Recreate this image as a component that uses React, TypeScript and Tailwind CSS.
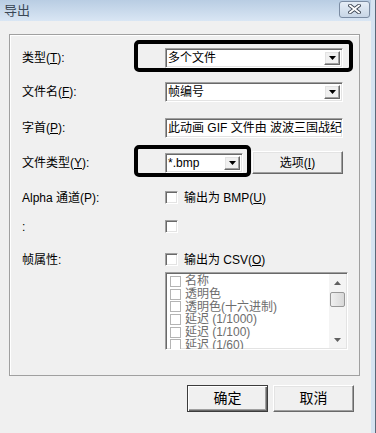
import React from "react";

const font = "font-['Liberation_Sans','Noto_Sans_CJK_SC',sans-serif]";

// classic sunken field border
const sunken =
  "border border-t-[#a0a0a0] border-l-[#a0a0a0] border-r-white border-b-white shadow-[inset_1px_1px_0_#696969,inset_-1px_-1px_0_#e3e3e3]";
// classic raised button border
const raised =
  "border border-t-white border-l-white border-r-[#696969] border-b-[#696969] shadow-[inset_-1px_-1px_0_#a0a0a0,inset_1px_1px_0_#e3e3e3] bg-[#f0f0f0]";

const Arrow = () => (
  <div className={`absolute right-[2px] top-[2px] bottom-[2px] w-[16px] flex items-center justify-center ${raised}`}>
    <svg width="7" height="4" viewBox="0 0 7 4"><path d="M0 0h7L3.5 4z" fill="#000" /></svg>
  </div>
);

const Combo = ({ text, w }: { text: string; w: string }) => (
  <div className={`relative h-[20px] ${w} bg-white ${sunken} flex items-center pl-[2px] text-[12px] text-black`}>
    {text}
    <Arrow />
  </div>
);

const Check = ({ gray }: { gray?: boolean }) => (
  <div
    className={
      gray
        ? "w-[11px] h-[11px] border border-[#b4b4b4] bg-white shrink-0"
        : `w-[13px] h-[13px] bg-white shrink-0 ${sunken}`
    }
  />
);

const Label = ({ children }: { children: React.ReactNode }) => (
  <div className="w-[143px] shrink-0 text-[12px] text-black leading-none">{children}</div>
);

const items = ["名称", "透明色", "透明色(十六进制)", "延迟 (1/1000)", "延迟 (1/100)", "延迟 (1/60)"];

export default function App() {
  return (
    <div className={`w-[376px] h-[433px] bg-[#f0f0f0] flex overflow-hidden relative ${font}`}>
      <div className="w-[371px] flex flex-col">
        {/* title bar */}
        <div className="h-[21px] bg-gradient-to-b from-[#b9cde3] to-[#d9e6f4] flex items-center justify-between pl-[4px] pr-[1px]">
          <span className="text-[13px] text-[#3a4756] leading-none">导出</span>
          <div className="w-[31px] h-[17px] mt-[-3px] rounded-[3px] border border-[#7b8ca3] bg-gradient-to-b from-[#e6eef7] to-[#c8d6e6] flex items-center justify-center">
            <svg width="13" height="10" viewBox="0 0 13 10">
              <path d="M2 1.5L11 8.5M11 1.5L2 8.5" stroke="#3d4654" strokeWidth="3.6" strokeLinecap="square" />
              <path d="M2 1.5L11 8.5M11 1.5L2 8.5" stroke="#fff" strokeWidth="1.8" strokeLinecap="square" />
            </svg>
          </div>
        </div>

        {/* group box */}
        <div className="ml-[9px] mt-[13px] w-[351px] h-[342px] border border-[#a0a0a0] shadow-[inset_1px_1px_0_#fff] flex flex-col pl-[12px]">
          <div className="flex items-center mt-[13px] h-[20px]">
            <Label>类型(<u>T</u>):</Label>
            <Combo text="多个文件" w="w-[178px]" />
          </div>
          <div className="flex items-center mt-[14px] h-[20px]">
            <Label>文件名(<u>F</u>):</Label>
            <Combo text="帧编号" w="w-[178px]" />
          </div>
          <div className="flex items-center mt-[16px] h-[20px]">
            <Label>字首(<u>P</u>):</Label>
            <div className={`h-[20px] w-[178px] bg-white ${sunken} flex items-center pl-[2px] text-[12px] text-black whitespace-nowrap overflow-hidden`}>
              此动画 GIF 文件由 波波三国战纪所导出
            </div>
          </div>
          <div className="flex items-center mt-[13px] h-[23px]">
            <Label>文件类型(<u>Y</u>):</Label>
            <Combo text="*.bmp" w="w-[78px]" />
            <button className={`ml-[9px] w-[91px] h-[23px] ${raised} text-[12px] text-black`}>
              选项(<u>I</u>)
            </button>
          </div>
          <div className="flex items-center mt-[17px] h-[13px]">
            <Label>Alpha 通道(P):</Label>
            <Check />
            <span className="ml-[6px] text-[12px] text-black leading-none">输出为 BMP(<u>U</u>)</span>
          </div>
          <div className="flex items-center mt-[16px] h-[13px]">
            <Label>:</Label>
            <Check />
          </div>
          <div className="flex items-center mt-[20px] h-[13px]">
            <Label>帧属性:</Label>
            <Check />
            <span className="ml-[6px] text-[12px] text-black leading-none">输出为 CSV(<u>O</u>)</span>
          </div>
          <div className="flex mt-[6px]">
            <div className="w-[143px] shrink-0" />
            <div className={`relative w-[183px] h-[78px] bg-white ${sunken} overflow-hidden`}>
              <div className="pl-[4px] pt-[2px] flex flex-col">
                {items.map((t) => (
                  <div key={t} className="h-[12.7px] flex items-center gap-[4px] text-[12px] text-[#6d6d6d] leading-none whitespace-nowrap">
                    <Check gray />
                    <span>{t}</span>
                  </div>
                ))}
              </div>
              {/* scrollbar */}
              <div className="absolute right-[1px] top-[1px] bottom-[1px] w-[17px] bg-[#f4f4f4] flex flex-col items-center">
                <div className="h-[17px] flex items-center justify-center">
                  <svg width="7" height="4" viewBox="0 0 7 4"><path d="M0 4h7L3.5 0z" fill="#606060" /></svg>
                </div>
                <div className="mt-[1px] w-[15px] h-[15px] rounded-[2px] border border-[#979797] bg-gradient-to-r from-[#f0f0f0] to-[#d8d8d8]" />
                <div className="flex-1" />
                <div className="h-[17px] flex items-center justify-center">
                  <svg width="7" height="4" viewBox="0 0 7 4"><path d="M0 0h7L3.5 4z" fill="#606060" /></svg>
                </div>
              </div>
            </div>
          </div>
        </div>

        {/* buttons */}
        <div className="flex mt-[9px] pl-[187px] gap-[5px]">
          <button className={`w-[81px] h-[27px] text-[14px] text-black border border-[#3c3c3c] shadow-[inset_1px_1px_0_#fff,inset_-1px_-1px_0_#696969,inset_-2px_-2px_0_#a0a0a0] bg-[#f0f0f0]`}>
            确定
          </button>
          <button className={`w-[81px] h-[27px] text-[14px] text-black ${raised}`}>取消</button>
        </div>
      </div>

      {/* window frame (right) */}
      <div className="w-[4px] bg-[#d6e3f1]" />
      <div className="w-[1px] bg-[#5b6878]" />

      {/* highlight overlays */}
      <div className="absolute left-[134px] top-[40px] w-[219px] h-[32px] border-[4px] border-black rounded-[5px]" />
      <div className="absolute left-[134px] top-[145px] w-[117px] h-[32px] border-[4px] border-black rounded-[5px]" />
    </div>
  );
}
